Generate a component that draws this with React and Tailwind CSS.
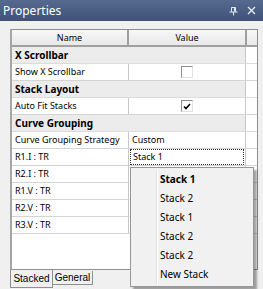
import React from "react";

const rows = [
  { kind: "cat", name: "X Scrollbar" },
  { kind: "prop", name: "Show X Scrollbar", check: false },
  { kind: "cat", name: "Stack Layout" },
  { kind: "prop", name: "Auto Fit Stacks", check: true },
  { kind: "cat", name: "Curve Grouping" },
  { kind: "prop", name: "Curve Grouping Strategy", value: "Custom" },
  { kind: "prop", name: "R1.I : TR", value: "Stack 1", focus: true },
  { kind: "prop", name: "R2.I : TR" },
  { kind: "prop", name: "R1.V : TR" },
  { kind: "prop", name: "R2.V : TR" },
  { kind: "prop", name: "R3.V : TR" },
];

const menuItems = ["Stack 1", "Stack 2", "Stack 1", "Stack 2", "Stack 2", "New Stack"];

function CheckBox({ checked }) {
  return (
    <div className="w-[12px] h-[12px] bg-white border border-t-[#8f8f8f] border-l-[#8f8f8f] border-r-[#e2e2e2] border-b-[#e2e2e2] flex items-center justify-center">
      {checked && (
        <svg width="8" height="7" viewBox="0 0 8 7">
          <path d="M1 3.5 L3 5.5 L7 1" stroke="#000" strokeWidth="1.6" fill="none" />
        </svg>
      )}
    </div>
  );
}

function Row({ row }) {
  if (row.kind === "cat") {
    return (
      <div className="h-[17px] flex items-center bg-[#ececec] border-b border-[#dcdcdc]">
        <div className="pl-[3px] font-bold text-[10px] text-black whitespace-nowrap">{row.name}</div>
        <div className="ml-auto w-[12px] h-full bg-white border-l border-[#c8c8c8]" />
      </div>
    );
  }
  return (
    <div className="h-[17px] flex bg-white border-b border-[#d4d4d4] text-[9px]">
      <div className="w-[117px] pl-[3px] flex items-center border-r border-[#c8c8c8] whitespace-nowrap overflow-hidden">
        {row.name}
      </div>
      <div className="flex-1 flex items-center justify-center">
        {row.check !== undefined ? (
          <CheckBox checked={row.check} />
        ) : row.focus ? (
          <div className="w-full h-full pl-[2px] flex items-center border border-dotted border-[#333] mx-[1px]">
            {row.value}
          </div>
        ) : (
          <div className="w-full pl-[3px]">{row.value}</div>
        )}
      </div>
      <div className="w-[12px] h-full bg-white border-l border-[#c8c8c8]" />
    </div>
  );
}

export default function App() {
  return (
    <div
      className="relative w-[263px] h-[289px] bg-[#f0f0f0] flex flex-col overflow-hidden text-black"
      style={{ fontFamily: "'Noto Sans', 'Liberation Sans', sans-serif" }}
    >
      {/* Title bar */}
      <div className="h-[21px] flex items-center bg-gradient-to-b from-[#56698f] to-[#3f5277] px-[3px]">
        <span className="text-white text-[12px]">Properties</span>
        <div className="ml-auto flex items-center gap-[9px] pr-[4px]">
          <svg width="9" height="10" viewBox="0 0 9 10">
            <path d="M2.5 1.5 H6.5 V5.5 M2.5 1.5 V5.5 M0.5 6 H8.5 M4.5 6 V9.5" stroke="#e6ecf5" strokeWidth="1" fill="none" />
            <path d="M5.5 1.5 V5.5" stroke="#e6ecf5" strokeWidth="1" />
          </svg>
          <svg width="9" height="9" viewBox="0 0 9 9">
            <path d="M1 1 L8 8 M8 1 L1 8" stroke="#e6ecf5" strokeWidth="1.4" />
          </svg>
        </div>
      </div>

      <div className="flex-1 flex flex-col pt-[8px] pl-[10px] pr-[5px]">
        {/* Grid */}
        <div className="h-[241px] flex flex-col bg-white border border-[#8f8f8f] border-l-2 border-l-[#a6a6a6]">
          {/* Header */}
          <div className="h-[17px] flex bg-gradient-to-b from-[#f7f7f7] to-[#e9e9e9] border-b-2 border-[#a0a0a0] text-[9px]">
            <div className="w-[117px] flex items-center justify-center border-r-2 border-[#a0a0a0]">Name</div>
            <div className="flex-1 flex items-center justify-center">Value</div>
            <div className="w-[12px] border-l-2 border-[#a0a0a0]" />
          </div>
          {rows.map((r, i) => (
            <Row key={i} row={r} />
          ))}
          <div className="flex-1 flex">
            <div className="flex-1" />
            <div className="w-[12px] border-l border-[#c8c8c8]" />
          </div>
        </div>

        {/* Tabs */}
        <div className="flex items-start text-[10px]" style={{ fontFamily: "'Liberation Sans', sans-serif" }}>
          <div className="w-[43px] h-[18px] flex items-end justify-center pb-[1px] bg-[#f0f0f0] border-x border-b border-[#8f8f8f]">
            Stacked
          </div>
          <div className="w-[40px] h-[14px] flex items-center justify-center border-r border-b border-[#8f8f8f] bg-[#f0f0f0] mt-[1px]">
            General
          </div>
        </div>
      </div>

      {/* Dropdown menu */}
      <div className="absolute left-[130px] top-[167px] w-[124px] py-[2px] bg-[#f1f1f1] border border-[#979797] shadow-[3px_3px_2px_rgba(0,0,0,0.35)] text-[10px]">
        <div className="absolute left-[25px] top-[2px] bottom-[2px] w-[2px] border-l border-[#e2e2e2] bg-white" />
        {menuItems.map((m, i) => (
          <div key={i} className={`h-[19px] flex items-center pl-[29px] ${i === 0 ? "font-bold" : ""}`}>
            {m}
          </div>
        ))}
      </div>
    </div>
  );
}
